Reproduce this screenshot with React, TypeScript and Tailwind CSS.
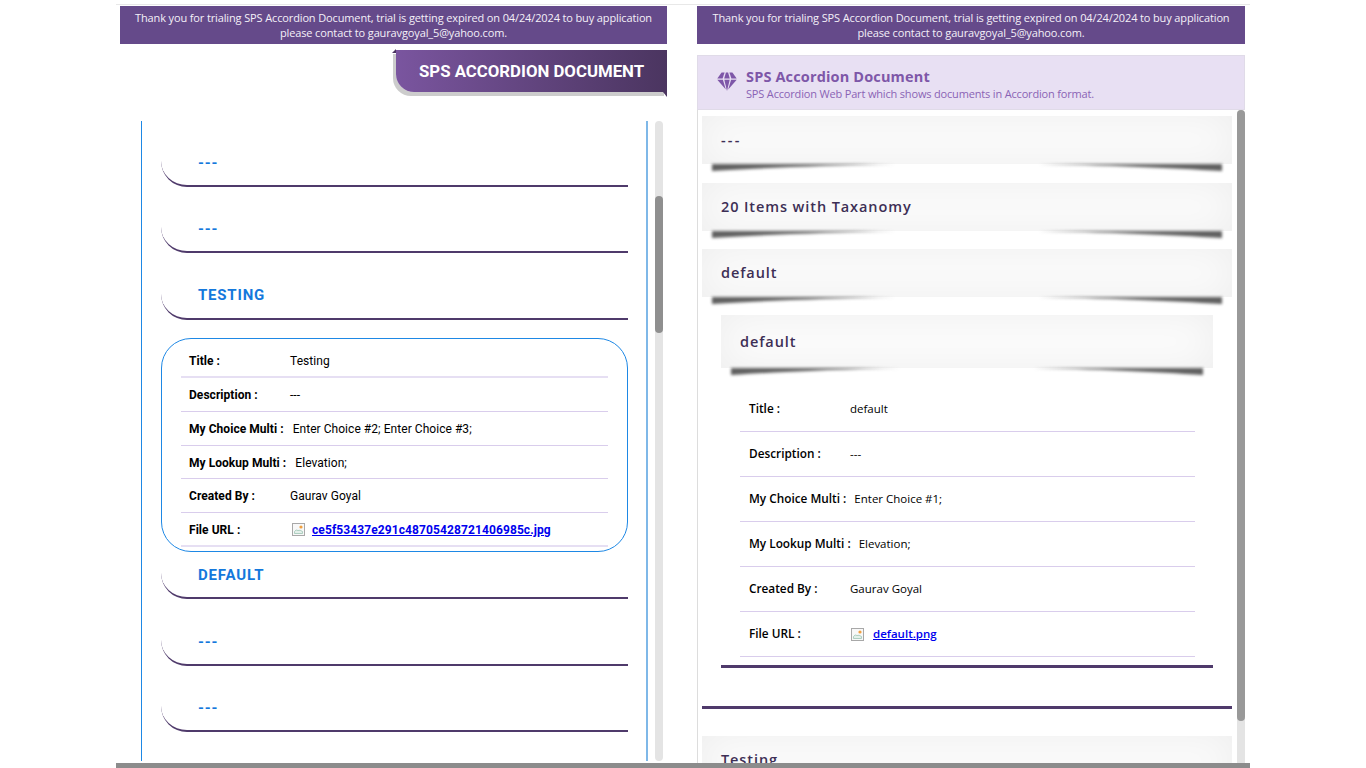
const TRIAL_TEXT =
  'Thank you for trialing SPS Accordion Document, trial is getting expired on 04/24/2024 to buy application please contact to gauravgoyal_5@yahoo.com.';

interface Row {
  label: string;
  value?: string;
  file?: string;
}

const leftRows: Row[] = [
  { label: 'Title :', value: 'Testing' },
  { label: 'Description :', value: '---' },
  { label: 'My Choice Multi :', value: 'Enter Choice #2; Enter Choice #3;' },
  { label: 'My Lookup Multi :', value: 'Elevation;' },
  { label: 'Created By :', value: 'Gaurav Goyal' },
  { label: 'File URL :', file: 'ce5f53437e291c48705428721406985c.jpg' },
];

const rightRows: Row[] = [
  { label: 'Title :', value: 'default' },
  { label: 'Description :', value: '---' },
  { label: 'My Choice Multi :', value: 'Enter Choice #1;' },
  { label: 'My Lookup Multi :', value: 'Elevation;' },
  { label: 'Created By :', value: 'Gaurav Goyal' },
  { label: 'File URL :', file: 'default.png' },
];

function FileIcon() {
  return (
    <svg width="13" height="13" viewBox="0 0 13 13" className="shrink-0">
      <rect x="0.5" y="0.5" width="12" height="12" fill="#f8f8f8" stroke="#a8a8a8" />
      <circle cx="9" cy="4" r="1.6" fill="#f0a040" />
      <path d="M2.5 10.5 V8.5 Q4 6 6 7.5 Q8 6.5 10.5 8.5 V10.5 Z" fill="#e4f0ea" stroke="#9cc4b4" strokeWidth="0.8" />
    </svg>
  );
}

function DiamondIcon() {
  return (
    <svg width="20" height="20" viewBox="0 0 20 20" className="shrink-0" fill="#7e57a8">
      <path d="M4.6 0.5 H7.6 L5.6 6.4 H0.3 Z" />
      <path d="M8.9 0.5 H11.1 L12.8 6.4 H7.2 Z" />
      <path d="M12.4 0.5 H15.4 L19.7 6.4 H14.4 Z" />
      <path d="M0.3 7.8 H5.9 L8.8 17.4 Z" />
      <path d="M7.3 7.8 H12.7 L10 19 Z" />
      <path d="M14.1 7.8 H19.7 L11.2 17.4 Z" />
    </svg>
  );
}

function TrialBanner() {
  return (
    <div className="h-[38px] bg-[#654a8a] px-2 pt-[4px] text-center font-['Open_Sans',sans-serif] text-[11px] leading-[15px] tracking-[-0.13px] text-[#f4f0f8]">
      {TRIAL_TEXT}
    </div>
  );
}

function LeftHeader({ title }: { title: string }) {
  return (
    <div className="mb-[20.3px] flex h-[46px] items-center rounded-bl-[26px] border-b-2 border-b-[#4f3a6b] pl-[37px]">
      <span className="text-[15px] font-bold tracking-[0.8px] text-[#1478dc]">{title}</span>
    </div>
  );
}

function LeftCard() {
  return (
    <div className="mb-[1.4px] -mt-[1.6px] rounded-[30px] border border-[#1e88e5] px-[19px] pt-[5px] pb-[4px] text-xs tracking-[0.05px] text-black">
      {leftRows.map((row, i) => (
        <div
          key={row.label}
          className={`flex h-[33.8px] items-center border-b pl-2 pt-px ${
            i === 0 || i === 5 ? 'border-[#e6dff3] border-b-2' : 'border-[#d9cdec]'
          }`}
        >
          <span className="mr-[9px] min-w-[92px] font-bold">{row.label}</span>
          {row.file ? (
            <span className="flex items-center gap-[7px] pl-[2px]">
              <FileIcon />
              <a className="font-bold tracking-[0.1px] text-[#0000ee] underline">{row.file}</a>
            </span>
          ) : (
            <span>{row.value}</span>
          )}
        </div>
      ))}
    </div>
  );
}

function LeftColumn() {
  return (
    <div className="flex w-[547px] flex-col font-['Roboto',sans-serif]">
      <TrialBanner />
      {/* Ribbon title */}
      <div className="mt-[6px] flex justify-end">
        <div className="relative flex h-[42px] w-[271px] items-center rounded-bl-[18px] bg-gradient-to-r from-[#7a559f] to-[#4b3560] pl-[23px] pt-[2px] shadow-[-3px_4px_0_#cccccc]">
          <span className="text-[16.8px] font-bold text-white">SPS ACCORDION DOCUMENT</span>
          <span className="absolute -left-[4px] -top-px h-0 w-0 border-b-[4px] border-l-[4px] border-b-[#4b3560] border-l-transparent" />
          <span className="absolute -bottom-[5px] right-0 h-0 w-0 border-t-[5px] border-l-[4px] border-t-[#4b3560] border-l-transparent" />
        </div>
      </div>
      <div className="mt-[29px] flex h-[640px] items-stretch pl-[21px]">
        <div className="h-full w-[507px] overflow-hidden border-l border-r-2 border-l-[#1e88e5] border-r-[#7fb8e8] pl-[19px] pr-[18px] pt-[20px]">
          <LeftHeader title="---" />
          <LeftHeader title="---" />
          <LeftHeader title="TESTING" />
          <LeftCard />
          <LeftHeader title="DEFAULT" />
          <LeftHeader title="---" />
          <LeftHeader title="---" />
        </div>
        <div className="ml-[7px] h-[640px] w-[8px] rounded-full bg-[#e4e4e4]">
          <div className="mt-[75px] h-[137px] rounded-full bg-[#8f8f8f]" />
        </div>
      </div>
    </div>
  );
}

function LiftedCard({ title, className }: { title: string; className: string }) {
  return (
    <div
      className={`relative flex items-center bg-[#fcfcfc] shadow-[inset_0_0_40px_rgba(0,0,0,0.06)] ${className}`}
    >
      <span
        className={`text-[14.5px] font-semibold text-[#3d2f55] ${
          title === '---' ? 'tracking-[2.2px]' : 'tracking-[0.9px]'
        }`}
      >
        {title}
      </span>
      <svg
        viewBox="0 0 100 10"
        preserveAspectRatio="none"
        className="absolute left-[10px] top-full h-[10px] w-[calc(100%-20px)] overflow-visible blur-[1.5px]"
      >
        <path d="M0 0 H100 V7 C90 4 76 1 64 0 H36 C24 1 10 4 0 7 Z" fill="#606060" />
      </svg>
    </div>
  );
}

function RightColumn() {
  return (
    <div className="flex w-[548px] flex-col font-['Open_Sans',sans-serif]">
      <TrialBanner />
      <div className="mt-[11px] flex h-[56px] items-center gap-[9px] border border-[#e0dbe8] bg-[#e8e0f3] pl-[19px]">
        <DiamondIcon />
        <div className="pt-[4px]">
          <div className="text-[14.5px] font-bold leading-[17px] tracking-[0.15px] text-[#7e57a8]">
            SPS Accordion Document
          </div>
          <div className="mt-[2px] text-[11px] leading-[14px] tracking-[-0.17px] text-[#8a63b5]">
            SPS Accordion Web Part which shows documents in Accordion format.
          </div>
        </div>
      </div>
      <div className="flex h-[653px] border-l border-[#dddddd]">
        <div className="h-full w-[539px] overflow-hidden pl-[4px] pr-[5px] pt-[6px]">
          <LiftedCard title="---" className="mb-[18.5px] h-[48px] pl-[19px]" />
          <LiftedCard title="20 Items with Taxanomy" className="mb-[18.5px] h-[48px] pl-[19px]" />
          <LiftedCard title="default" className="mb-[18px] h-[48px] pl-[19px]" />
          <div className="px-[19px]">
            <LiftedCard title="default" className="h-[53px] pl-[19px]" />
            <div className="pl-[19px] pr-[18px] pt-[19px] text-[11.5px] text-black">
              {rightRows.map((row) => (
                <div key={row.label} className="flex h-[45px] items-center border-b border-[#d9cdec] pl-[9px]">
                  <span className="min-w-[101px] whitespace-nowrap pr-2 text-[11.8px] font-semibold">{row.label}</span>
                  {row.file ? (
                    <span className="flex items-center gap-[9px] pl-px">
                      <FileIcon />
                      <a className="font-semibold text-[#0000ee] underline">{row.file}</a>
                    </span>
                  ) : (
                    <span>{row.value}</span>
                  )}
                </div>
              ))}
            </div>
            <div className="mt-[8px] h-[3px] bg-[#4f3a6b]" />
          </div>
          <div className="mt-[38px] h-[3px] bg-[#4f3a6b]" />
          <LiftedCard title="Testing" className="mt-[27px] h-[48px] pl-[19px]" />
        </div>
        <div className="h-full w-[8px] rounded-t-full bg-[#e4e4e4]">
          <div className="h-[611px] rounded-full bg-[#999999]" />
        </div>
      </div>
    </div>
  );
}

export default function App() {
  return (
    <div className="flex h-[768px] flex-col overflow-hidden bg-white">
      <div className="ml-[116px] flex h-[768px] w-[1134px] flex-col pt-1">
        <div className="flex flex-1 gap-[30px] overflow-hidden border-t border-[#e8e8e8] pl-1 pt-px">
          <LeftColumn />
          <RightColumn />
        </div>
        <div className="h-[5px] bg-[#8c8c8c]" />
      </div>
    </div>
  );
}
